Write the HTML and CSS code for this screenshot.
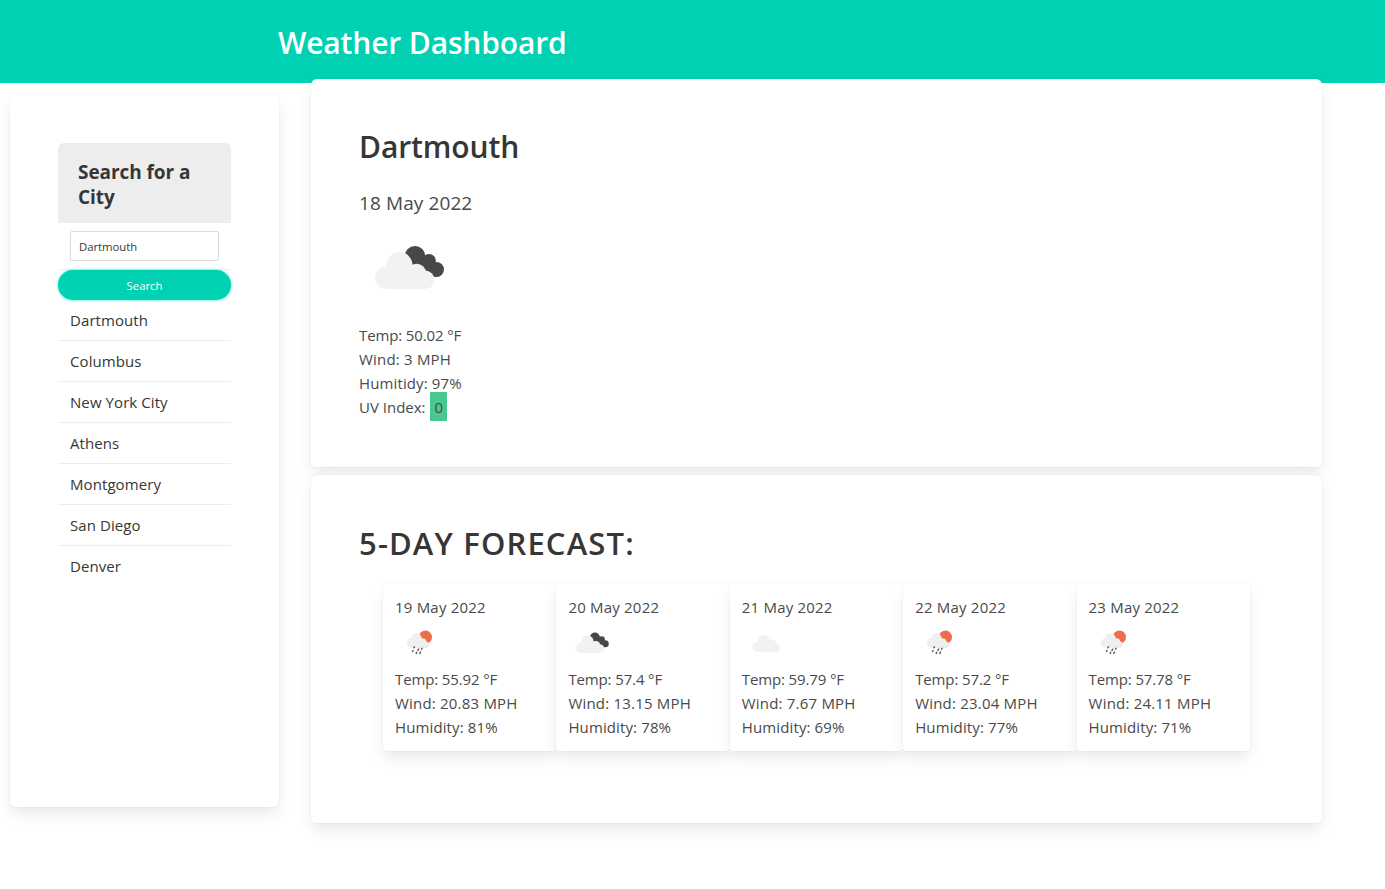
FILE: index.html
```
<!DOCTYPE html>
<html lang="en">
<head>
<meta charset="utf-8">
<title>Weather Dashboard</title>
<link rel="stylesheet" href="styles.css">
</head>
<body>
<svg class="defs" aria-hidden="true">
  <symbol id="broken-clouds" viewBox="0 0 100 100">
    <g fill="#484848"><circle cx="56" cy="38.3" r="10.3"/><circle cx="70" cy="42.8" r="6.9"/><circle cx="77.6" cy="51.5" r="7.4"/><path d="M46.5 42 56 34 66 37 76 45 77 58.9 66 56z"/></g>
    <g fill="#f2f2f2"><circle cx="27" cy="60" r="11"/><circle cx="40.5" cy="47" r="12.9"/><circle cx="57.5" cy="55.3" r="9.6"/><circle cx="66.2" cy="61.8" r="9.2"/><path d="M27 50H52L67 58V71H27z"/></g>
  </symbol>
  <symbol id="cloud" viewBox="0 0 50 50">
    <g fill="#f2f2f2"><circle cx="15.4" cy="29" r="5.1"/><circle cx="21.7" cy="23" r="6"/><circle cx="29.6" cy="26" r="4.6"/><circle cx="33.4" cy="29.6" r="4.5"/><path d="M15 25H30L34 29V34.1H15z"/></g>
  </symbol>
  <symbol id="rain" viewBox="0 0 50 50">
    <circle cx="30.4" cy="19.2" r="6.6" fill="#ec6e4c"/>
    <g fill="#efeff0"><circle cx="16" cy="25" r="4.4"/><circle cx="21.4" cy="20.5" r="5.3"/><circle cx="27.3" cy="24.3" r="4"/><circle cx="30.2" cy="26.6" r="3.4"/><path d="M16 21H26L31 25V30H16z"/></g>
    <path d="M19.4 28.9 19 29.8M18 32.6 17.5 33.5M23.6 31.2 23 32.4M21.6 34.4 21.2 35.4M27 30.4 26.6 31.2M25.4 34 24.8 35.4" stroke="#5c5c5c" stroke-width="1.5" stroke-linecap="round"/>
  </symbol>
</svg>
<header class="hero"><h1 class="hero-title">Weather Dashboard</h1></header>
<main class="layout">
  <aside class="box sidebar">
    <h2 class="panel-heading">Search for a City</h2>
    <div class="panel-search"><input class="input" type="text" value="Dartmouth"></div>
    <button class="button">Search</button>
    <ul class="cities">
      <li>Dartmouth</li><li>Columbus</li><li>New York City</li><li>Athens</li><li>Montgomery</li><li>San Diego</li><li>Denver</li>
    </ul>
  </aside>
  <div class="content">
    <section class="box current">
      <h2 class="title">Dartmouth</h2>
      <p class="date">18 May 2022</p>
      <svg class="icon-large"><use href="#broken-clouds"/></svg>
      <p class="temp">Temp: 50.02 °F</p>
      <p class="wind">Wind: 3 MPH</p>
      <p class="humidity">Humitidy: 97%</p>
      <p>UV Index: <span class="uv">0</span></p>
    </section>
    <section class="box forecast">
      <h2 class="title title-forecast">5-DAY FORECAST:</h2>
      <div class="days">
        <article class="day"><p class="wind">19 May 2022</p><svg class="icon"><use href="#rain"/></svg><p class="temp">Temp: 55.92 °F</p><p class="wind">Wind: 20.83 MPH</p><p class="humidity">Humidity: 81%</p></article>
        <article class="day"><p class="wind">20 May 2022</p><svg class="icon icon-clouds"><use href="#broken-clouds"/></svg><p class="temp">Temp: 57.4 °F</p><p class="wind">Wind: 13.15 MPH</p><p class="humidity">Humidity: 78%</p></article>
        <article class="day"><p class="wind">21 May 2022</p><svg class="icon"><use href="#cloud"/></svg><p class="temp">Temp: 59.79 °F</p><p class="wind">Wind: 7.67 MPH</p><p class="humidity">Humidity: 69%</p></article>
        <article class="day"><p class="wind">22 May 2022</p><svg class="icon"><use href="#rain"/></svg><p class="temp">Temp: 57.2 °F</p><p class="wind">Wind: 23.04 MPH</p><p class="humidity">Humidity: 77%</p></article>
        <article class="day"><p class="wind">23 May 2022</p><svg class="icon"><use href="#rain"/></svg><p class="temp">Temp: 57.78 °F</p><p class="wind">Wind: 24.11 MPH</p><p class="humidity">Humidity: 71%</p></article>
      </div>
    </section>
  </div>
</main>
</body>
</html>
```
FILE: styles.css
```
* { box-sizing: border-box; margin: 0; padding: 0; }
body { min-height: 100vh; font: 15px/24px "Open Sans", "Noto Sans", sans-serif; color: #4a4a4a; background: #fff; }
.defs { display: none; }
.hero { height: 83px; padding: 24px 0 0 278px; background: #00d1b2; }
.hero-title { font-size: 30px; line-height: 38px; font-weight: 600; letter-spacing: -.15px; color: #fff; }
.layout { display: flex; align-items: flex-start; gap: 32px; padding: 0 63px 66px 10px; }
.box { padding: 48px; border-radius: 6px; background: #fff; box-shadow: 0 8px 16px -2px rgba(10,10,10,.1), 0 0 0 1px rgba(10,10,10,.02); }
.sidebar { width: 269px; height: 712px; margin-top: 12px; flex: none; }
.panel-heading { height: 80px; padding: 17px 20px 13px; border-radius: 6px 6px 0 0; background: #ededed; color: #363636; font-size: 19px; line-height: 25px; font-weight: 700; letter-spacing: -.06px; }
.panel-search { height: 47px; padding: 8px 12px; border-bottom: 1px solid #ededed; }
.input { display: block; width: 100%; height: 30px; padding: 0 8px; border: 1px solid #dbdbdb; border-radius: 2px; color: #363636; font: 11.3px "Open Sans", sans-serif; }
.button { display: block; width: 100%; height: 30px; border: 0; border-radius: 15px; background: #00d1b2; color: #fff; font: 11.3px "Open Sans", sans-serif; box-shadow: 0 0 2px 1px #8ff5e6; }
.cities { list-style: none; color: #363636; letter-spacing: .08px; }
.cities li { height: 41px; padding: 8px 12px; border-bottom: 1px solid #ededed; }
.cities li:last-child { border-bottom: 0; }
.content { flex: 1; margin-top: -4px; display: flex; flex-direction: column; gap: 8px; }
.current { height: 388px; }
.forecast { height: 348px; }
.title { font-size: 30px; line-height: 40px; font-weight: 600; letter-spacing: -.1px; color: #363636; }
.date { margin-top: 24px; font-size: 19px; line-height: 25px; letter-spacing: .1px; }
.icon-large { display: block; width: 100px; height: 100px; margin: 2px 0 5px; }
.temp { letter-spacing: -.13px; }
.wind { letter-spacing: .2px; }
.humidity { letter-spacing: .12px; }
.uv { display: inline-block; width: 17px; height: 29px; margin: -3px 0 -3px 1px; padding: 3px 4px 2px; background: #48c78e; }
.title-forecast { font-size: 31px; letter-spacing: 1.15px; }
.days { display: grid; grid-template-columns: repeat(5, 1fr); margin: 20px 24px 0; }
.day { height: 168px; padding: 12px; border-radius: 4px; background: #fff; box-shadow: 0 8px 16px -2px rgba(10,10,10,.1), 0 0 0 1px rgba(10,10,10,.02); }
.icon { display: block; width: 50px; height: 50px; margin: -1px 0; }
.icon-clouds { width: 48px; height: 48px; margin: 0; }
```
